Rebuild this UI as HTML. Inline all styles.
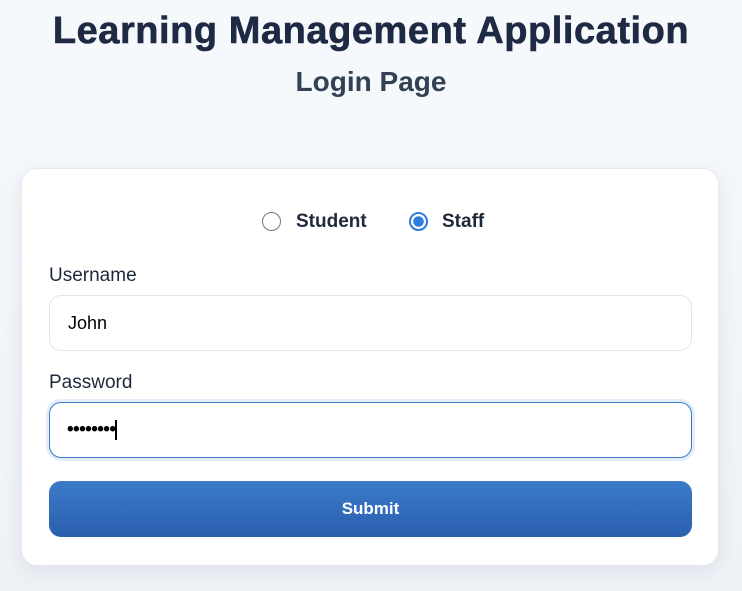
<!DOCTYPE html>
<html><head><style>
body{margin:0;width:742px;height:591px;background:linear-gradient(#f6f9fc,#eef2f7);font-family:"Liberation Sans",sans-serif;overflow:hidden;position:relative;color:#1e293b}
h1{position:absolute;top:10px;left:0;width:742px;text-align:center;margin:0;font-size:38px;font-weight:bold;color:#1e2a44;letter-spacing:0.55px;-webkit-text-stroke:0.6px #1e2a44}
h2{position:absolute;top:66px;left:0;width:742px;text-align:center;margin:0;font-size:28px;font-weight:bold;color:#334155}
.card{position:absolute;left:21px;top:168px;width:698px;height:398px;background:#fff;border-radius:16px;border:1px solid #e5e9ef;box-shadow:0 6px 20px rgba(30,41,59,0.08);box-sizing:border-box}
.r{position:absolute;top:212px;width:19px;height:19px;border-radius:50%;box-sizing:border-box}
.lab{position:absolute;font-size:19px;color:#1e293b}
.inp{position:absolute;left:49px;width:643px;height:56px;border:1px solid #e2e6ec;border-radius:12px;box-sizing:border-box;background:#fff}
.btn{position:absolute;left:49px;top:481px;width:643px;height:56px;border-radius:12px;background:linear-gradient(#3b7bca,#2b5fae);color:#fff;font-weight:bold;font-size:17px;text-align:center;line-height:56px}
</style></head><body>
<h1>Learning Management Application</h1>
<h2>Login Page</h2>
<div class="card"></div>
<div class="r" style="left:262px;border:1.5px solid #777"></div>
<div class="lab" style="left:296px;top:211px;font-weight:bold;font-size:19px">Student</div>
<div class="r" style="left:409px;border:2px solid #2f7be0;background:radial-gradient(circle,#2f7be0 0 5px,#fff 5.5px)"></div>
<div class="lab" style="left:442px;top:211px;font-weight:bold;font-size:19px">Staff</div>
<div class="lab" style="left:49px;top:265px">Username</div>
<div class="inp" style="top:295px"><span style="position:absolute;left:18px;top:17px;font-size:18px;color:#000">John</span></div>
<div class="lab" style="left:49px;top:372px">Password</div>
<div class="inp" style="top:402px;border:1.5px solid #3b7bca;box-shadow:0 0 0 3px #e4eefa"><span style="position:absolute;left:17px;top:16px;font-size:19px;color:#000;letter-spacing:-0.6px;font-weight:bold">••••••••</span><span style="position:absolute;left:65px;top:17px;width:1.5px;height:20px;background:#000"></span></div>
<div class="btn">Submit</div>
</body></html>
